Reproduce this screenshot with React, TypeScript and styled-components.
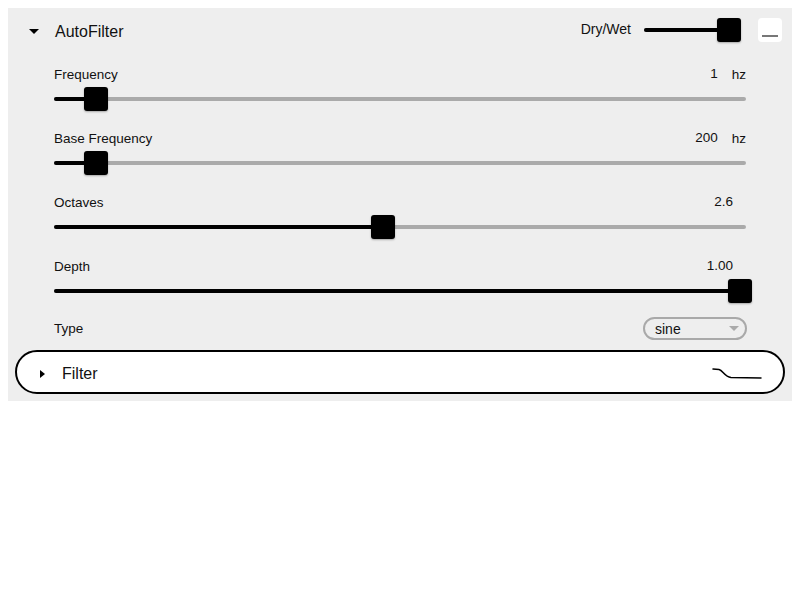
import React from "react";
import styled, { createGlobalStyle } from "styled-components";

const GlobalStyle = createGlobalStyle`
  body {
    margin: 8px;
    background: #ffffff;
    font-family: "Liberation Sans", Arial, Helvetica, sans-serif;
    color: #111;
  }
`;

interface Param {
  label: string;
  value: string;
  unit?: string;
  pos: number;
}

const params: Param[] = [
  { label: "Frequency", value: "1", unit: "hz", pos: 30 / 674 },
  { label: "Base Frequency", value: "200", unit: "hz", pos: 30 / 674 },
  { label: "Octaves", value: "2.6", pos: 317 / 674 },
  { label: "Depth", value: "1.00", pos: 1 },
];

const Panel = styled.div`
  width: 784px;
  background: #eeeeee;
  display: flex;
  flex-direction: column;
  padding-bottom: 7px;
`;

const Header = styled.div`
  height: 44px;
  display: flex;
  align-items: center;
  padding: 0 10px 0 21px;
`;

const DownCaret = styled.span`
  width: 0;
  height: 0;
  border-left: 5px solid transparent;
  border-right: 5px solid transparent;
  border-top: 5px solid #000;
  margin-top: 2px;
`;

const RightCaret = styled.span`
  width: 0;
  height: 0;
  border-top: 4px solid transparent;
  border-bottom: 4px solid transparent;
  border-left: 5px solid #000;
`;

const Title = styled.span`
  font-size: 16px;
  margin-left: 16px;
  margin-top: 3px;
  flex: 1;
`;

const DryWetLabel = styled.span`
  font-size: 14px;
  margin-right: 13px;
  margin-top: -2px;
`;

const BypassButton = styled.div`
  width: 24px;
  height: 24px;
  margin-left: 23px;
  background: #ffffff;
  border-radius: 4px;
  display: flex;
  align-items: flex-end;
  justify-content: center;
  padding-bottom: 5px;
  box-sizing: border-box;
`;

const Underscore = styled.span`
  width: 16px;
  height: 2px;
  background: #777;
`;

const Params = styled.div`
  display: flex;
  flex-direction: column;
  gap: 14px;
  padding: 9px 46px 0 46px;
`;

const ParamBlock = styled.div`
  display: flex;
  flex-direction: column;
  padding-top: 5px;
  gap: 5px;
`;

const LabelRow = styled.div<{ $hasUnit: boolean }>`
  height: 16px;
  display: flex;
  align-items: center;
  font-size: 13.5px;
  padding-right: ${({ $hasUnit }) => ($hasUnit ? "0" : "13px")};
`;

const Label = styled.span`
  flex: 1;
`;

const Value = styled.span`
  margin-top: -2px;
`;

const Unit = styled.span`
  margin-left: 14px;
`;

const SliderBox = styled.div<{ $width: number }>`
  position: relative;
  width: ${({ $width }) => $width}px;
  height: 24px;
  display: flex;
  align-items: center;
`;

const Rail = styled.div`
  position: relative;
  width: 100%;
  height: 4px;
  border-radius: 2px;
  background: #aaaaaa;
`;

const Fill = styled.div`
  position: absolute;
  left: 0;
  top: 0;
  height: 100%;
  border-radius: 2px;
  background: #000;
`;

const Thumb = styled.div`
  position: absolute;
  top: 0;
  width: 24px;
  height: 24px;
  border-radius: 3px;
  background: #000;
  box-shadow: 0 1px 2px rgba(0, 0, 0, 0.3);
`;

const TypeRow = styled.div`
  height: 23px;
  display: flex;
  align-items: center;
  justify-content: space-between;
  font-size: 13.5px;
`;

const Select = styled.div`
  width: 104px;
  height: 23px;
  margin-right: -1px;
  box-sizing: border-box;
  border: 2px solid #a9a9a9;
  border-radius: 12px;
  display: flex;
  align-items: center;
  padding: 0 6px 0 10px;
  font-size: 14px;
`;

const SelectText = styled.span`
  flex: 1;
`;

const SelectArrow = styled.span`
  width: 0;
  height: 0;
  border-left: 5.5px solid transparent;
  border-right: 5.5px solid transparent;
  border-top: 5px solid #aaaaaa;
`;

const FilterBox = styled.div`
  margin: 10px 7px 0 7px;
  height: 44px;
  box-sizing: border-box;
  border: 2px solid #000;
  border-radius: 22px;
  background: #ffffff;
  display: flex;
  align-items: center;
  padding: 3px 21px 0 23px;
`;

const FilterTitle = styled.span`
  font-size: 16px;
  margin-left: 17px;
  flex: 1;
`;

const Slider: React.FC<{ width: number; pos: number }> = ({ width, pos }) => {
  const left = pos * (width - 18);
  return (
    <SliderBox $width={width}>
      <Rail>
        <Fill style={{ width: left + 12 }} />
      </Rail>
      <Thumb style={{ left }} />
    </SliderBox>
  );
};

const FilterCurve = () => (
  <svg width="50" height="14" viewBox="0 0 50 14">
    <path
      d="M1 2 L7 2.6 C11 3.5 12.5 10 19 10.6 L49 11"
      fill="none"
      stroke="#000"
      strokeWidth="1.5"
      strokeLinecap="round"
    />
  </svg>
);

export default function App() {
  return (
    <>
      <GlobalStyle />
      <Panel>
        <Header>
          <DownCaret />
          <Title>AutoFilter</Title>
          <DryWetLabel>Dry/Wet</DryWetLabel>
          <Slider width={91} pos={1} />
          <BypassButton>
            <Underscore />
          </BypassButton>
        </Header>

        <Params>
          {params.map((p) => (
            <ParamBlock key={p.label}>
              <LabelRow $hasUnit={!!p.unit}>
                <Label>{p.label}</Label>
                <Value>{p.value}</Value>
                {p.unit && <Unit>{p.unit}</Unit>}
              </LabelRow>
              <Slider width={692} pos={p.pos} />
            </ParamBlock>
          ))}
          <TypeRow>
            <span>Type</span>
            <Select>
              <SelectText>sine</SelectText>
              <SelectArrow />
            </Select>
          </TypeRow>
        </Params>

        <FilterBox>
          <RightCaret />
          <FilterTitle>Filter</FilterTitle>
          <FilterCurve />
        </FilterBox>
      </Panel>
    </>
  );
}
